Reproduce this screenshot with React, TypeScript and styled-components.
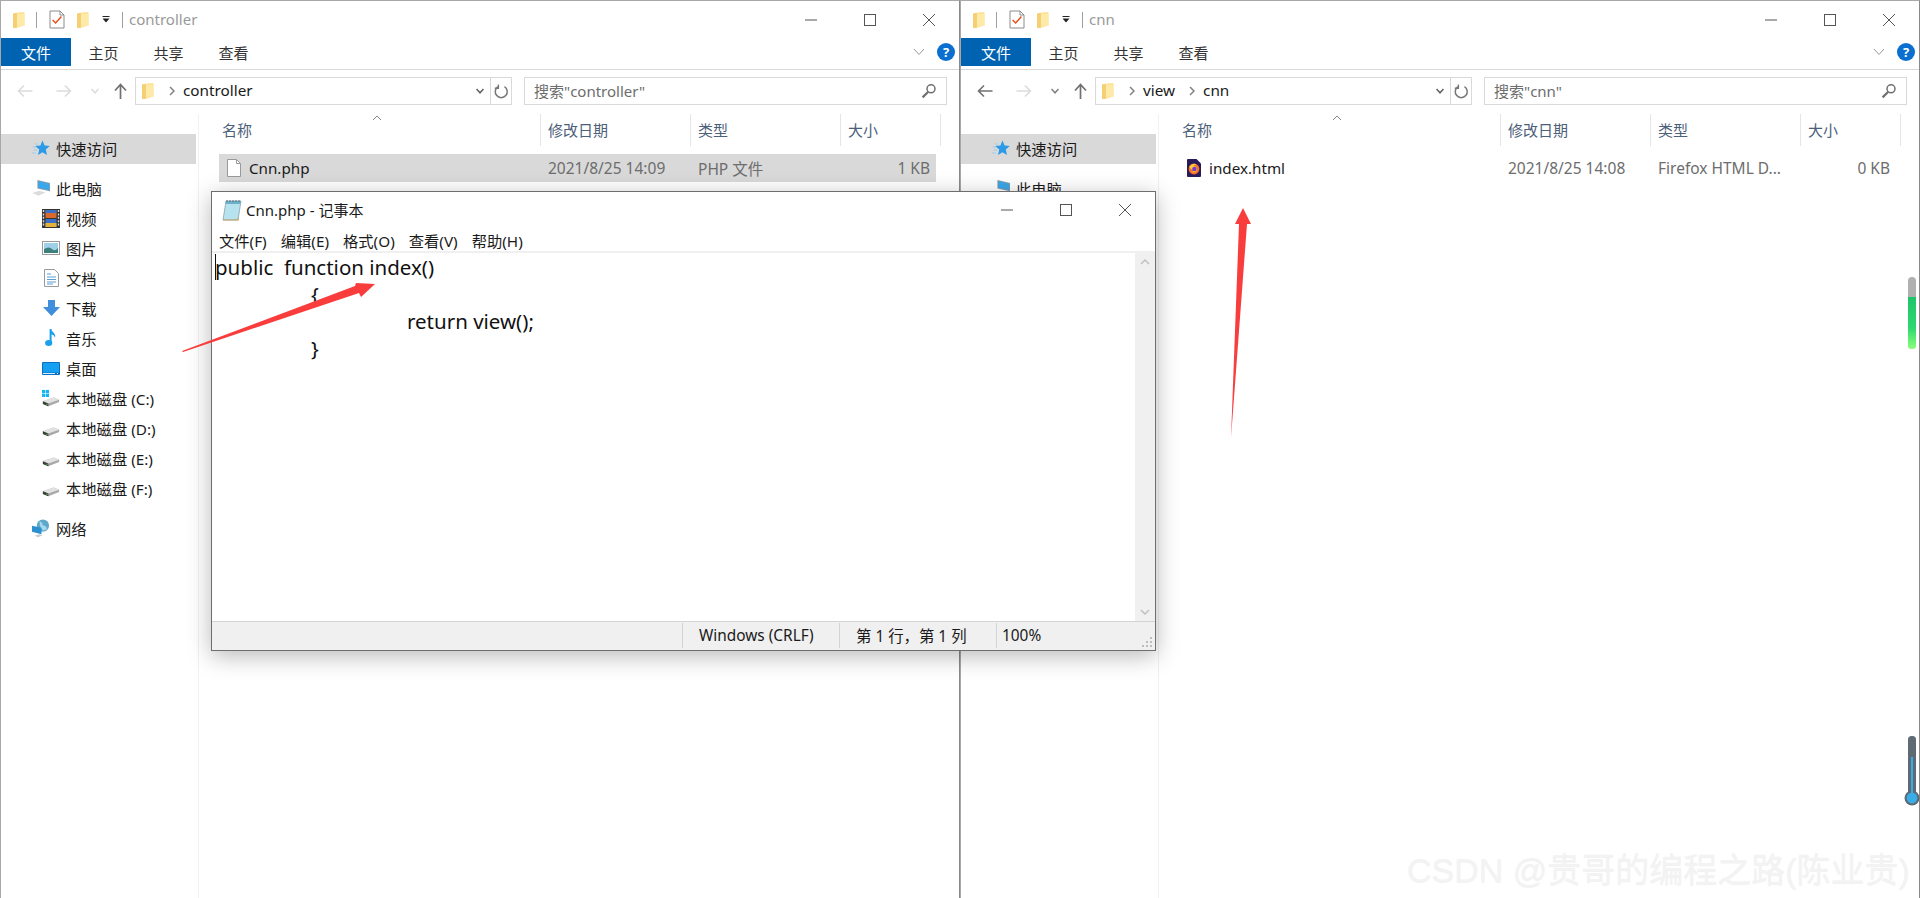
import React from 'react';
import styled, { createGlobalStyle } from 'styled-components';

const FONT = `"Noto Sans", "Noto Sans CJK SC", sans-serif`;

const Global = createGlobalStyle`
  html, body { margin: 0; padding: 0; background: #fff; overflow: hidden; }
  body { font-family: ${FONT}; color: #111; }
  * { box-sizing: border-box; }
`;

const Desktop = styled.div`
  position: relative;
  display: flex;
  width: 1920px;
  height: 898px;
  overflow: hidden;
  background: #fff;
`;

const ExplorerFrame = styled.section`
  flex: 0 0 960px;
  height: 898px;
  display: flex;
  flex-direction: column;
  border-top: 1px solid #a8a8a8;
  border-left: 1px solid #a8a8a8;
  border-right: 1px solid #8a8a8a;
  background: #fff;
`;

const TitleBar = styled.header`
  height: 37px;
  flex: none;
  display: flex;
  align-items: center;
  padding-left: 11px;
`;
const QuickIcons = styled.div`
  display: flex;
  align-items: center;
  height: 100%;
`;
const QuickSep = styled.span<{ $ml: number; $mr: number; $blank?: boolean }>`
  width: 1px;
  height: 16px;
  background: ${p => (p.$blank ? 'transparent' : '#a0a0a0')};
  margin: 0 ${p => p.$mr}px 0 ${p => p.$ml}px;
`;
const TitleText = styled.span`
  font-size: 15px;
  color: #9a9a9a;
  margin-top: -2px;
`;
const WinControls = styled.div`
  margin-left: auto;
  display: flex;
  align-items: center;
  height: 100%;
  padding-right: 1px;
`;
const WinBtn = styled.span`
  width: 59px;
  display: flex;
  justify-content: center;
  align-items: center;
`;

const TabRow = styled.nav`
  height: 32px;
  flex: none;
  display: flex;
  align-items: flex-start;
  border-bottom: 1px solid #d9d9d9;
  position: relative;
`;
const Tab = styled.span<{ $active?: boolean }>`
  width: ${p => (p.$active ? 70 : 65)}px;
  height: 28px;
  display: flex;
  align-items: center;
  justify-content: center;
  font-size: 15px;
  color: ${p => (p.$active ? '#fff' : '#333')};
  background: ${p => (p.$active ? '#0063b1' : 'transparent')};
`;
const RibbonEnd = styled.div`
  margin-left: auto;
  height: 28px;
  display: flex;
  align-items: center;
  gap: 12px;
  padding-right: 4px;
`;
const HelpDot = styled.span`
  width: 18px;
  height: 18px;
  border-radius: 50%;
  background: #0a6fcf;
  color: #fff;
  font-size: 13px;
  font-weight: 700;
  display: flex;
  align-items: center;
  justify-content: center;
  line-height: 1;
`;

const AddressRow = styled.div`
  height: 44px;
  flex: none;
  display: flex;
  align-items: flex-start;
  padding-top: 7px;
`;
const NavBtns = styled.div`
  width: 134px;
  height: 28px;
  display: flex;
  align-items: center;
  padding-left: 16px;
  flex: none;
`;
const NavGap = styled.span<{ $w: number }>`
  width: ${p => p.$w}px;
`;
const AddressBox = styled.div`
  width: 377px;
  height: 28px;
  border: 1px solid #d9d9d9;
  display: flex;
  align-items: center;
  padding-left: 5px;
  flex: none;
`;
const Crumb = styled.span`
  font-size: 15.3px;
  color: #1a1a1a;
  line-height: 1;
`;
const CrumbChevron = styled.span`
  display: flex;
  margin: 0 8px 0 14px;
`;
const AddressEnd = styled.div`
  margin-left: auto;
  display: flex;
  align-items: center;
  height: 100%;
`;
const RefreshCell = styled.span`
  height: 100%;
  width: 21px;
  border-left: 1px solid #d9d9d9;
  margin-left: 6px;
  display: flex;
  align-items: center;
  justify-content: center;
`;
const SearchBox = styled.div`
  margin-left: 12px;
  width: 423px;
  height: 28px;
  border: 1px solid #d9d9d9;
  display: flex;
  align-items: center;
  justify-content: space-between;
  padding: 0 9px 1px;
  font-size: 15px;
  color: #6d6d6d;
  flex: none;
`;

const Body = styled.div`
  flex: 1;
  display: flex;
  min-height: 0;
`;
const Sidebar = styled.aside`
  width: 198px;
  flex: none;
  padding-top: 20px;
  border-right: 1px solid #f0f0f0;
`;
const NavItem = styled.div<{ $level?: number; $selected?: boolean; $gap?: boolean }>`
  height: 30px;
  width: 195px;
  display: flex;
  align-items: center;
  gap: 6px;
  padding-left: ${p => (p.$level === 2 ? 41 : 31)}px;
  padding-bottom: 2px;
  margin-top: ${p => (p.$gap ? 10 : 0)}px;
  font-size: 15.3px;
  color: #1a1a1a;
  white-space: nowrap;
  background: ${p => (p.$selected ? '#d9d9d9' : 'transparent')};
`;
const NavIconBox = styled.span`
  width: 18px;
  height: 20px;
  display: flex;
  align-items: center;
  justify-content: center;
  flex: none;
`;

const Listing = styled.main`
  flex: 1;
  position: relative;
  padding-left: 20px;
  min-width: 0;
`;
const SortCaret = styled.span`
  position: absolute;
  left: 173px;
  top: 1px;
  display: flex;
`;
const HeaderRow = styled.div`
  display: grid;
  grid-template-columns: 322px 150px 150px 100px;
  height: 32px;
`;
const HeaderCell = styled.div`
  display: flex;
  align-items: center;
  padding: 0 0 2px 3px;
  font-size: 15px;
  color: #4c607a;
  border-right: 1px solid #e5e5e5;
  &:not(:first-child) { padding-left: 7px; }
`;
const FileRow = styled.div<{ $selected?: boolean }>`
  margin-top: 8px;
  width: 717px;
  display: grid;
  grid-template-columns: 321px 150px 150px 96px;
  height: 28px;
  align-items: center;
  background: ${p => (p.$selected ? '#d9d9d9' : 'transparent')};
`;
const FileName = styled.div`
  display: flex;
  align-items: center;
  gap: 8px;
  padding-left: 8px;
  font-size: 15.2px;
  color: #1a1a1a;
`;
const FileMeta = styled.div<{ $right?: boolean }>`
  color: #6d6d6d;
  font-size: 15.5px;
  padding-left: ${p => (p.$right ? 0 : 8)}px;
  padding-right: ${p => (p.$right ? 6 : 0)}px;
  text-align: ${p => (p.$right ? 'right' : 'left')};
  white-space: nowrap;
`;

/* Notepad */
const Notepad = styled.section`
  position: absolute;
  left: 211px;
  top: 191px;
  width: 945px;
  height: 460px;
  display: flex;
  flex-direction: column;
  background: #fff;
  border: 1px solid #6e6e6e;
  box-shadow: 0 5px 22px rgba(0, 0, 0, 0.28);
  z-index: 2;
`;
const NoteTitle = styled.header`
  height: 36px;
  flex: none;
  display: flex;
  align-items: center;
  padding: 0 0 1px 10px;
  gap: 4px;
  font-size: 15px;
  color: #1a1a1a;
`;
const NoteControls = styled.div`
  margin-left: auto;
  display: flex;
  align-items: center;
  padding-right: 1px;
`;
const NoteMenu = styled.nav`
  height: 25px;
  flex: none;
  display: flex;
  align-items: center;
  padding-left: 7px;
  gap: 14px;
  font-size: 15.3px;
  color: #1a1a1a;
  border-bottom: 2px solid #f0f0f0;
`;
const NoteBody = styled.div`
  flex: 1;
  display: flex;
  min-height: 0;
  position: relative;
`;
const Editor = styled.div`
  flex: 1;
  padding: 1px 0 0 3px;
  font-size: 20.5px;
  line-height: 27px;
  color: #111;
  white-space: pre;
`;
const Caret = styled.span`
  position: absolute;
  left: 3px;
  top: 1px;
  width: 1px;
  height: 26px;
  background: #111;
`;
const CodeLine = styled.div<{ $indent: number }>`
  height: 27px;
  padding-left: ${p => p.$indent}px;
`;
const ScrollTrack = styled.div`
  width: 20px;
  flex: none;
  background: #f0f0f0;
  display: flex;
  flex-direction: column;
  justify-content: space-between;
  align-items: center;
  padding: 6px 0;
`;
const StatusBar = styled.footer`
  height: 29px;
  flex: none;
  display: grid;
  grid-template-columns: 471px 157px 157px 1fr;
  background: #f0f0f0;
  border-top: 1px solid #d4d4d4;
  font-size: 15.4px;
  color: #1a1a1a;
  position: relative;
`;
const StatusCell = styled.div<{ $pad?: number }>`
  display: flex;
  align-items: center;
  padding-left: ${p => p.$pad ?? 0}px;
  border-right: 1px solid #d4d4d4;
  margin: 1px 0 2px;
  &:last-of-type { border-right: 0; }
`;
const Grip = styled.span`
  position: absolute;
  right: 2px;
  bottom: 2px;
  display: flex;
`;

/* Overlays */
const ArrowsLayer = styled.svg`
  position: absolute;
  inset: 0;
  z-index: 3;
  pointer-events: none;
`;
const Watermark = styled.div`
  position: absolute;
  left: 1407px;
  top: 848px;
  z-index: 3;
  font-family: "Liberation Sans", "Noto Sans CJK SC", sans-serif;
  font-size: 34px;
  line-height: 44px;
  white-space: nowrap;
  color: #f3f3f3;
  text-shadow: 0 1px 1px rgba(0, 0, 0, 0.06);
`;
const PillMeter = styled.svg`
  position: absolute;
  left: 1907px;
  top: 277px;
  z-index: 3;
`;
const ThermoMeter = styled.svg`
  position: absolute;
  left: 1902px;
  top: 736px;
  z-index: 3;
`;

/* Icons */
const Folder = () => (
  <svg width="14" height="18" viewBox="0 0 14 18">
    <path d="M1 2.5 L7 1.2 L12.5 1 L12.5 14.5 L5 16.8 L1 17 Z" fill="#ffe39a" />
    <path d="M1 2.5 L1 17 L5 16.8 L5 2 Z" fill="#f4cf73" />
    <path d="M5 3 L12.5 3 L12.5 15 L5 15 Z" fill="#fde9a8" />
  </svg>
);
const CheckDoc = () => (
  <svg width="16" height="19" viewBox="0 0 16 19">
    <path d="M1 1 H11 L15 5 V18 H1 Z" fill="#fff" stroke="#8c8c8c" />
    <path d="M11 1 V5 H15" fill="none" stroke="#8c8c8c" />
    <path d="M3.6 10 L6.6 13 L12.4 6.4" fill="none" stroke="#e8501e" strokeWidth="1.5" />
  </svg>
);
const DropCaret = () => (
  <svg width="8" height="7" viewBox="0 0 8 7">
    <rect x="0.5" y="0" width="7" height="1" fill="#222" />
    <path d="M0.5 2.5 H7.5 L4 6.5 Z" fill="#222" />
  </svg>
);
const MinGlyph = () => (
  <svg width="12" height="12" viewBox="0 0 12 12"><path d="M0 6 H12" stroke="#555" /></svg>
);
const MaxGlyph = () => (
  <svg width="12" height="12" viewBox="0 0 12 12"><rect x=".5" y=".5" width="11" height="11" fill="none" stroke="#555" /></svg>
);
const CloseGlyph = () => (
  <svg width="12" height="12" viewBox="0 0 12 12"><path d="M0 0 L12 12 M12 0 L0 12" stroke="#555" /></svg>
);
const Chevron = ({ color = '#888' }: { color?: string }) => (
  <svg width="12" height="8" viewBox="0 0 12 8"><path d="M1 1 L6 6.5 L11 1" fill="none" stroke={color} /></svg>
);
const ArrowLeft = ({ color }: { color: string }) => (
  <svg width="16" height="14" viewBox="0 0 16 14"><path d="M15.5 7 H1.5 M7 1.5 L1.5 7 L7 12.5" fill="none" stroke={color} strokeWidth="1.6" /></svg>
);
const ArrowRight = ({ color }: { color: string }) => (
  <svg width="16" height="14" viewBox="0 0 16 14"><path d="M.5 7 H14.5 M9 1.5 L14.5 7 L9 12.5" fill="none" stroke={color} strokeWidth="1.6" /></svg>
);
const SmallDown = ({ color }: { color: string }) => (
  <svg width="8" height="6" viewBox="0 0 8 6"><path d="M.5 1 L4 4.8 L7.5 1" fill="none" stroke={color} strokeWidth="1.5" /></svg>
);
const ArrowUp = () => (
  <svg width="13" height="16" viewBox="0 0 13 16"><path d="M6.5 16 V2 M1 7.5 L6.5 1.5 L12 7.5" fill="none" stroke="#707070" strokeWidth="1.7" /></svg>
);
const RightChev = () => (
  <svg width="6" height="10" viewBox="0 0 6 10"><path d="M1 1 L5 5 L1 9" fill="none" stroke="#808080" strokeWidth="1.5" /></svg>
);
const Refresh = () => (
  <svg width="15" height="15" viewBox="0 0 15 15">
    <path d="M10.5 2.6 A6 6 0 1 1 4 2.6" fill="none" stroke="#777" strokeWidth="1.5" />
    <path d="M3.8 0.4 V4.2 H0.2" transform="translate(.6 0)" fill="none" stroke="#777" strokeWidth="1.4" />
  </svg>
);
const Magnifier = () => (
  <svg width="16" height="16" viewBox="0 0 16 16">
    <circle cx="10" cy="5.8" r="4" fill="none" stroke="#707070" strokeWidth="1.5" />
    <path d="M7 9 L1.6 14.4" stroke="#707070" strokeWidth="2.2" />
  </svg>
);
const Star = () => (
  <svg width="18" height="17" viewBox="0 0 18 17">
    <path d="M10.5 0.5 L12.6 5.6 L17.8 6 L13.8 9.6 L15 15 L10.5 12.2 L6 15 L7.2 9.6 L3.2 6 L8.4 5.6 Z" fill="#2b9ae8" />
    <path d="M0.5 7 H4 M1.5 10 H5 M0 13 H4 M3 4 H6" stroke="#9ccbea" />
  </svg>
);
const Pc = () => (
  <svg width="20" height="18" viewBox="0 0 20 18">
    <path d="M6 0 L20 3.5 V12.5 L6 9.5 Z" fill="#8a9aa6" />
    <path d="M6.8 1.2 L19.2 4.3 V11.5 L6.8 8.7 Z" fill="#3ba7e8" />
    <path d="M0.5 14.5 L8 12 L15 14 L7 17.5 Z" fill="#dcdcdc" />
  </svg>
);
const Film = () => (
  <svg width="18" height="19" viewBox="0 0 18 19">
    <rect width="18" height="19" fill="#333" />
    <rect x="3.5" y="1" width="11" height="8" fill="#d96a2b" />
    <rect x="3.5" y="1" width="11" height="3" fill="#3a70c8" />
    <rect x="3.5" y="10" width="11" height="8" fill="#3a70c8" />
    <rect x="3.5" y="14" width="11" height="4" fill="#e4b23a" />
    <path d="M1.5 1 V18 M16.5 1 V18" stroke="#ddd" strokeWidth="1.4" strokeDasharray="2 1.4" />
  </svg>
);
const Picture = () => (
  <svg width="18" height="14" viewBox="0 0 18 14">
    <rect x=".5" y=".5" width="17" height="13" fill="#fff" stroke="#9a9a9a" />
    <rect x="2" y="2" width="14" height="10" fill="#9fd0ea" />
    <path d="M2 8 Q7 5 10 8 T16 7 V12 H2 Z" fill="#3d7f7a" />
  </svg>
);
const DocIcon = () => (
  <svg width="15" height="18" viewBox="0 0 15 18">
    <path d="M.5 .5 H10.5 L14.5 4.5 V17.5 H.5 Z" fill="#fff" stroke="#9a9a9a" />
    <path d="M3 5 H7 M3 8 H12 M3 10.5 H12 M3 13 H12 M3 15 H9" stroke="#5a9fd4" />
  </svg>
);
const DownArrow = () => (
  <svg width="17" height="16" viewBox="0 0 17 16">
    <path d="M5 0 H12 V7 H17 L8.5 16 L0 7 H5 Z" fill="#3f8fdc" />
  </svg>
);
const Note = () => (
  <svg width="12" height="18" viewBox="0 0 12 18">
    <path d="M5.6 0 V13.5" stroke="#18a0ea" strokeWidth="2" />
    <ellipse cx="3.7" cy="14" rx="3.6" ry="3" fill="#18a0ea" />
    <path d="M5.6 0 C6.5 3 11.5 4 10 9 C9.5 6 7 5.5 5.6 5 Z" fill="#18a0ea" />
  </svg>
);
const DesktopIcon = () => (
  <svg width="18" height="13" viewBox="0 0 18 13">
    <rect width="18" height="13" rx="1" fill="#0a6fc4" />
    <rect x="1" y="1" width="16" height="9.5" fill="#16a0f2" />
    <path d="M1 11.5 H17" stroke="#d5eefc" strokeDasharray="12 2 1 1" />
  </svg>
);
const Drive = ({ win }: { win?: boolean }) => (
  <svg width="20" height="19" viewBox="0 0 20 19">
    <path d="M1 12.5 L13 8.5 L19 11 V13.5 L7 18 L1 15.5 Z" fill="#a8a8a8" />
    <path d="M1 12.5 L13 8.5 L19 11 L7 15 Z" fill="#e2e2e2" />
    <path d="M1 12.5 L7 15 V18 L1 15.5 Z" fill="#3c3c3c" />
    <rect x="4.8" y="15.3" width="1.4" height="1.4" fill="#3fc24d" />
    {win && (
      <g fill="#17b4f2">
        <rect x="0" y="0" width="3.6" height="3.6" />
        <rect x="4.2" y="0" width="3.6" height="3.6" />
        <rect x="0" y="4.2" width="3.6" height="3.6" />
        <rect x="4.2" y="4.2" width="3.6" height="3.6" />
      </g>
    )}
  </svg>
);
const Network = () => (
  <svg width="19" height="19" viewBox="0 0 19 19">
    <circle cx="11.5" cy="6.5" r="6.5" fill="#5fa8cc" />
    <path d="M8 2 Q12 3 11 6 Q15 6 16 10 L12 12 Q8 9 8 2 Z" fill="#a5d8ea" />
    <path d="M0 6.5 L10 8.8 V15.5 L0 13 Z" fill="#2b90d0" />
    <path d="M3 17 L8 15.5 L11 17 L6 18.8 Z" fill="#c9c9c9" />
  </svg>
);
const BlankFile = () => (
  <svg width="14" height="18" viewBox="0 0 14 18">
    <path d="M.5 .5 H9.5 L13.5 4.5 V17.5 H.5 Z" fill="#fff" stroke="#9a9a9a" />
    <path d="M9.5 .5 V4.5 H13.5" fill="none" stroke="#9a9a9a" />
  </svg>
);
const FirefoxFile = () => (
  <svg width="14" height="18" viewBox="0 0 14 18">
    <path d="M0 1 Q0 0 1 0 H9.5 L14 4.5 V17 Q14 18 13 18 H1 Q0 18 0 17 Z" fill="#2b1a5a" />
    <circle cx="7" cy="10" r="5.4" fill="#f5712c" />
    <path d="M2.2 8 Q5 3.5 9.5 5.4 Q7 5.4 7 7.2 Q10.6 7.4 10 11 Q8 14.5 4.5 13 Q7.6 12.6 7 10.4 Q4 11 2.2 8 Z" fill="#ffcb3d" />
    <circle cx="7.4" cy="10" r="2.2" fill="#7a3cc8" />
  </svg>
);
const NotepadIcon = () => (
  <svg width="20" height="22" viewBox="0 0 20 22">
    <path d="M4 2 H19 L16 21 H1 Z" fill="#b7e3ee" stroke="#7a9aa6" strokeWidth=".7" />
    <path d="M4 2 H19 L18.4 5 H3.5 Z" fill="#6bb1c8" />
    <path d="M5 3 V1 M8 3 V1 M11 3 V1 M14 3 V1 M17 3 V1" stroke="#556" strokeWidth=".8" />
    <path d="M1 21 H16 L16.4 18.6" fill="none" stroke="#c9a76b" strokeWidth="1.2" />
  </svg>
);
const GripDots = () => (
  <svg width="12" height="12" viewBox="0 0 12 12" fill="#bdbdbd">
    <rect x="9" y="1" width="2" height="2" />
    <rect x="5" y="5" width="2" height="2" /><rect x="9" y="5" width="2" height="2" />
    <rect x="1" y="9" width="2" height="2" /><rect x="5" y="9" width="2" height="2" /><rect x="9" y="9" width="2" height="2" />
  </svg>
);

const navItems: { icon: React.ReactNode; label: string; level: number; gap?: boolean; selected?: boolean }[] = [
  { icon: <Star />, label: '快速访问', level: 1, selected: true },
  { icon: <Pc />, label: '此电脑', level: 1, gap: true },
  { icon: <Film />, label: '视频', level: 2 },
  { icon: <Picture />, label: '图片', level: 2 },
  { icon: <DocIcon />, label: '文档', level: 2 },
  { icon: <DownArrow />, label: '下载', level: 2 },
  { icon: <Note />, label: '音乐', level: 2 },
  { icon: <DesktopIcon />, label: '桌面', level: 2 },
  { icon: <Drive win />, label: '本地磁盘 (C:)', level: 2 },
  { icon: <Drive />, label: '本地磁盘 (D:)', level: 2 },
  { icon: <Drive />, label: '本地磁盘 (E:)', level: 2 },
  { icon: <Drive />, label: '本地磁盘 (F:)', level: 2 },
  { icon: <Network />, label: '网络', level: 1, gap: true },
];

type ExplorerProps = {
  title: string;
  crumbs: string[];
  canGoBack: boolean;
  file: { icon: React.ReactNode; name: string; date: string; type: string; size: string; selected?: boolean };
};

const Explorer = ({ title, crumbs, canGoBack, file }: ExplorerProps) => (
  <ExplorerFrame>
    <TitleBar>
      <QuickIcons>
        <Folder />
        <QuickSep $ml={10} $mr={12} />
        <CheckDoc />
        <QuickSep $ml={10} $mr={0} $blank />
        <Folder />
        <QuickSep $ml={11} $mr={0} $blank />
        <DropCaret />
        <QuickSep $ml={12} $mr={6} />
      </QuickIcons>
      <TitleText>{title}</TitleText>
      <WinControls>
        <WinBtn><MinGlyph /></WinBtn>
        <WinBtn><MaxGlyph /></WinBtn>
        <WinBtn><CloseGlyph /></WinBtn>
      </WinControls>
    </TitleBar>
    <TabRow>
      <Tab $active>文件</Tab>
      <Tab>主页</Tab>
      <Tab>共享</Tab>
      <Tab>查看</Tab>
      <RibbonEnd>
        <Chevron color="#999" />
        <HelpDot>?</HelpDot>
      </RibbonEnd>
    </TabRow>
    <AddressRow>
      <NavBtns>
        <ArrowLeft color={canGoBack ? '#707070' : '#dcdcdc'} />
        <NavGap $w={23} />
        <ArrowRight color="#dcdcdc" />
        <NavGap $w={19} />
        <SmallDown color={canGoBack ? '#808080' : '#dcdcdc'} />
        <NavGap $w={15} />
        <ArrowUp />
      </NavBtns>
      <AddressBox>
        <Folder />
        {crumbs.map(c => (
          <React.Fragment key={c}>
            <CrumbChevron><RightChev /></CrumbChevron>
            <Crumb>{c}</Crumb>
          </React.Fragment>
        ))}
        <AddressEnd>
          <SmallDown color="#606060" />
          <RefreshCell><Refresh /></RefreshCell>
        </AddressEnd>
      </AddressBox>
      <SearchBox>
        <span>搜索"{title}"</span>
        <Magnifier />
      </SearchBox>
    </AddressRow>
    <Body>
      <Sidebar>
        {navItems.map(n => (
          <NavItem key={n.label} $level={n.level} $gap={n.gap} $selected={n.selected}>
            <NavIconBox>{n.icon}</NavIconBox>
            {n.label}
          </NavItem>
        ))}
      </Sidebar>
      <Listing>
        <SortCaret>
          <svg width="10" height="6" viewBox="0 0 10 6"><path d="M1 5 L5 1 L9 5" fill="none" stroke="#888" /></svg>
        </SortCaret>
        <HeaderRow>
          <HeaderCell>名称</HeaderCell>
          <HeaderCell>修改日期</HeaderCell>
          <HeaderCell>类型</HeaderCell>
          <HeaderCell>大小</HeaderCell>
        </HeaderRow>
        <FileRow $selected={file.selected}>
          <FileName>{file.icon}{file.name}</FileName>
          <FileMeta>{file.date}</FileMeta>
          <FileMeta>{file.type}</FileMeta>
          <FileMeta $right>{file.size}</FileMeta>
        </FileRow>
      </Listing>
    </Body>
  </ExplorerFrame>
);

const code = [
  { text: 'public  function index()', indent: 0 },
  { text: '{', indent: 96 },
  { text: 'return view();', indent: 192 },
  { text: '}', indent: 96 },
];

export default function App() {
  return (
    <Desktop>
      <Global />
      <Explorer
        title="controller"
        crumbs={['controller']}
        canGoBack={false}
        file={{ icon: <BlankFile />, name: 'Cnn.php', date: '2021/8/25 14:09', type: 'PHP 文件', size: '1 KB', selected: true }}
      />
      <Explorer
        title="cnn"
        crumbs={['view', 'cnn']}
        canGoBack
        file={{ icon: <FirefoxFile />, name: 'index.html', date: '2021/8/25 14:08', type: 'Firefox HTML D...', size: '0 KB' }}
      />
      <Notepad>
        <NoteTitle>
          <NotepadIcon />
          Cnn.php - 记事本
          <NoteControls>
            <WinBtn><MinGlyph /></WinBtn>
            <WinBtn><MaxGlyph /></WinBtn>
            <WinBtn><CloseGlyph /></WinBtn>
          </NoteControls>
        </NoteTitle>
        <NoteMenu>
          <span>文件(F)</span>
          <span>编辑(E)</span>
          <span>格式(O)</span>
          <span>查看(V)</span>
          <span>帮助(H)</span>
        </NoteMenu>
        <NoteBody>
          <Editor>
            <Caret />
            {code.map(l => (
              <CodeLine key={l.text} $indent={l.indent}>{l.text}</CodeLine>
            ))}
          </Editor>
          <ScrollTrack>
            <svg width="10" height="6" viewBox="0 0 10 6"><path d="M1 5 L5 1 L9 5" fill="none" stroke="#bdbdbd" strokeWidth="1.4" /></svg>
            <svg width="10" height="6" viewBox="0 0 10 6"><path d="M1 1 L5 5 L9 1" fill="none" stroke="#bdbdbd" strokeWidth="1.4" /></svg>
          </ScrollTrack>
        </NoteBody>
        <StatusBar>
          <StatusCell />
          <StatusCell $pad={16}>Windows (CRLF)</StatusCell>
          <StatusCell $pad={16}>第 1 行，第 1 列</StatusCell>
          <StatusCell $pad={5}>100%</StatusCell>
          <Grip><GripDots /></Grip>
        </StatusBar>
      </Notepad>
      <ArrowsLayer width="1920" height="898" viewBox="0 0 1920 898">
        <path d="M182 351 L355 286 L356 283 L375 284 L361 297 L359 293 L183 352 Z" fill="#f93d3d" />
        <path d="M1231 438 L1239 224 L1235 224 L1243 208 L1251 224 L1247 224 Z" fill="#f93d3d" />
      </ArrowsLayer>
      <PillMeter width="10" height="76" viewBox="0 0 10 76">
        <defs>
          <linearGradient id="meterFill" x1="0" y1="0" x2="0" y2="1">
            <stop offset="0" stopColor="#1fc46a" />
            <stop offset="0.6" stopColor="#2fd870" />
            <stop offset="1" stopColor="#8cff7a" />
          </linearGradient>
        </defs>
        <rect x="1" y="0" width="8" height="72" rx="4" fill="#b0b0b0" />
        <path d="M1 20 H9 V68 A4 4 0 0 1 1 68 Z" fill="url(#meterFill)" />
      </PillMeter>
      <ThermoMeter width="18" height="72" viewBox="0 0 18 72">
        <rect x="6" y="0" width="8" height="60" rx="3.5" fill="#5e6b75" />
        <circle cx="10" cy="62" r="7.5" fill="#5e6b75" />
        <rect x="9" y="21" width="2" height="40" fill="#38ade8" />
        <circle cx="10" cy="62" r="5.4" fill="#38ade8" />
      </ThermoMeter>
      <Watermark>CSDN @贵哥的编程之路(陈业贵)</Watermark>
    </Desktop>
  );
}
